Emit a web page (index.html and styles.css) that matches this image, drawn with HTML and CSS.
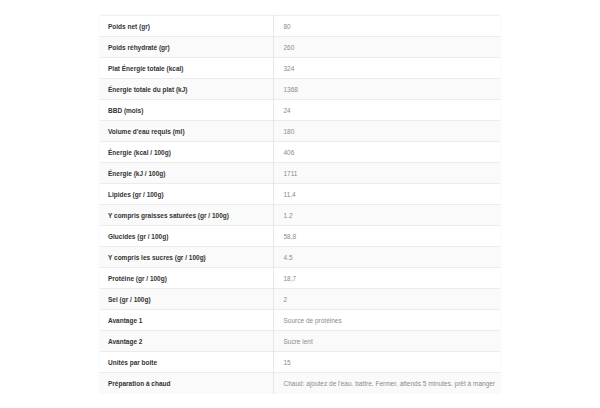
FILE: index.html
```html
<!DOCTYPE html>
<html lang="fr">
<head>
<meta charset="utf-8">
<link rel="stylesheet" href="styles.css">
</head>
<body>
<div class="wrap">
<table class="specs">
<colgroup><col class="c-label"><col class="c-value"></colgroup>
<tbody>
<tr><th>Poids net (gr)</th><td>80</td></tr>
<tr><th>Poids réhydraté (gr)</th><td>260</td></tr>
<tr><th>Plat Énergie totale (kcal)</th><td>324</td></tr>
<tr><th>Énergie totale du plat (kJ)</th><td>1368</td></tr>
<tr><th>BBD (mois)</th><td>24</td></tr>
<tr><th>Volume d'eau requis (ml)</th><td>180</td></tr>
<tr><th>Énergie (kcal / 100g)</th><td>406</td></tr>
<tr><th>Énergie (kJ / 100g)</th><td>1711</td></tr>
<tr><th>Lipides (gr / 100g)</th><td>11,4</td></tr>
<tr><th>Y compris graisses saturées (gr / 100g)</th><td>1.2</td></tr>
<tr><th>Glucides (gr / 100g)</th><td>58,8</td></tr>
<tr><th>Y compris les sucres (gr / 100g)</th><td>4.5</td></tr>
<tr><th>Protéine (gr / 100g)</th><td>18,7</td></tr>
<tr><th>Sel (gr / 100g)</th><td>2</td></tr>
<tr><th>Avantage 1</th><td>Source de protéines</td></tr>
<tr><th>Avantage 2</th><td>Sucre lent</td></tr>
<tr><th>Unités par boite</th><td>15</td></tr>
<tr><th>Préparation à chaud</th><td>Chaud: ajoutez de l'eau. battre. Fermer. attends 5 minutes. prêt à manger</td></tr>
</tbody>
</table>
</div>
</body>
</html>
```
FILE: styles.css
```css
html, body {
  margin: 0;
  padding: 0;
  background: #ffffff;
}
.wrap {
  padding: 15px 100px 0 100px;
}
.specs {
  width: 400px;
  table-layout: fixed;
  border-collapse: collapse;
  font-family: "Liberation Sans", Arial, sans-serif;
  font-size: 6.5px;
  box-shadow: 0 0 3px rgba(0,0,0,0.05);
}
.c-label {
  width: 173px;
}
.c-value {
  width: 227px;
}
.specs tr {
  height: 21px;
  border-bottom: 1px solid #ebebeb;
}
.specs tr:first-child {
  border-top: 1px solid #f0f0f0;
}
.specs tr:last-child {
  border-bottom: none;
}
.specs tr:nth-child(even) {
  background: #fafafa;
}
.specs th {
  text-align: left;
  font-weight: bold;
  color: #333333;
  padding: 0 8px;
  border-right: 1px solid #e6e6e6;
}
.specs td {
  color: #8a8a8a;
  padding: 0 0 0 10px;
  white-space: nowrap;
  overflow: visible;
}
```
